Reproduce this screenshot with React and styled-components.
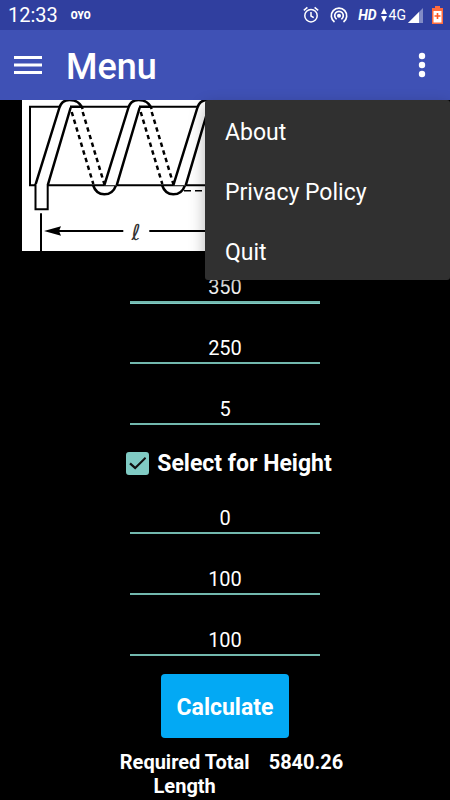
import React, { useState } from 'react';
import styled, { createGlobalStyle } from 'styled-components';

const GlobalStyle = createGlobalStyle`
  * {
    box-sizing: border-box;
  }

  body {
    margin: 0;
    background: #000;
    color: #fff;
    font-family: Roboto, "Liberation Sans", sans-serif;
  }
`;

const Page = styled.div`
  display: flex;
  flex-direction: column;
`;

const StatusBar = styled.div`
  display: flex;
  align-items: center;
  height: 30px;
  padding: 0 7px 0 8px;
  background: #303f9f;
`;

const Clock = styled.span`
  font-size: 20px;
  line-height: 30px;
`;

const Carrier = styled.span`
  flex: 1;
  margin-left: 13px;
  font-size: 10px;
  font-weight: 900;
`;

const StatusIcon = styled.svg`
  flex: none;
  margin-left: ${({ $gap }) => $gap || 0}px;
`;

const HdLabel = styled.span`
  margin-left: 10px;
  font-size: 14px;
  font-style: italic;
  font-weight: 700;
`;

const NetworkLabel = styled.span`
  margin-left: 2px;
  font-size: 14px;
`;

const Toolbar = styled.header`
  position: relative;
  display: flex;
  align-items: center;
  height: 70px;
  padding: 0 14px;
  background: #3f51b5;
`;

const IconButton = styled.button`
  display: flex;
  padding: 0;
  border: 0;
  background: none;
  color: #fff;
  cursor: pointer;
`;

const Title = styled.h1`
  flex: 1;
  margin: 4px 0 0 24px;
  font-size: 36px;
  font-weight: 500;
  line-height: 40px;
`;

const Menu = styled.div`
  position: absolute;
  top: 100%;
  right: 0;
  z-index: 1;
  display: flex;
  flex-direction: column;
  width: 245px;
  border-radius: 3px;
  background: #303030;
  box-shadow: 0 6px 16px rgba(0, 0, 0, 0.3);
`;

const MenuItem = styled.button`
  height: 60px;
  padding: 4px 20px 0;
  border: 0;
  background: none;
  color: #fff;
  font-family: inherit;
  font-size: 23px;
  text-align: left;
  cursor: pointer;
`;

const Figure = styled.svg`
  display: block;
  width: 100%;
  height: auto;
  background: #fff;
`;

const Content = styled.main`
  padding: 0 22px;
`;

const Form = styled.form`
  display: flex;
  flex-direction: column;
  align-items: center;
  margin-top: 18px;
`;

const Fields = styled.div`
  display: flex;
  flex-direction: column;
  gap: 27px;
`;

const Field = styled.input`
  width: 190px;
  height: 34px;
  padding: 3px 0 0;
  border: 0;
  border-bottom: 2px solid #72b8ae;
  outline: 0;
  background: none;
  box-shadow: ${({ $active }) => ($active ? '0 1px 0 #80cbc4' : 'none')};
  color: #fff;
  font-family: inherit;
  font-size: 20px;
  text-align: center;
`;

const CheckRow = styled.label`
  display: flex;
  align-items: center;
  gap: 8px;
  margin: 24px 0 22px;
  padding-left: 8px;
  font-size: 23px;
  font-weight: 700;
  line-height: 29px;
`;

const CheckBox = styled.input`
  appearance: none;
  display: grid;
  place-items: center;
  width: 23px;
  height: 23px;
  margin: 0;
  border: 2px solid #80cbc4;
  border-radius: 3px;

  &:checked {
    background: #80cbc4;
  }

  &:checked::before {
    content: "";
    width: 17px;
    height: 13px;
    background: #111;
    clip-path: polygon(0 55%, 9% 43%, 35% 74%, 92% 0, 100% 11%, 35% 97%);
  }
`;

const SubmitButton = styled.button`
  width: 128px;
  height: 64px;
  margin-top: 18px;
  padding: 2px 0 0;
  border: 0;
  border-radius: 4px;
  background: #03a9f4;
  color: #fff;
  font-family: inherit;
  font-size: 23px;
  font-weight: 700;
  cursor: pointer;
`;

const Result = styled.div`
  display: flex;
  justify-content: center;
  gap: 14px;
  margin-top: 12px;
  padding-left: 8px;
  font-size: 20px;
  font-weight: 700;
  line-height: 24px;
`;

const ResultLabel = styled.label`
  width: 140px;
  text-align: center;
`;

const COIL_STEP = 69;
const COILS = [0, 1, 2, 3, 4];

const CoilFigure = () => (
  <Figure viewBox="0 0 406 151" role="img" aria-label="Coil length diagram">
    <g fill="none" stroke="#000" strokeWidth="2.5">
      <path d="M8 6.7H398V85.3H8Z" strokeWidth="2" />
      {COILS.map((i) => (
        <g key={i} transform={`translate(${i * COIL_STEP} 0)`}>
          <path d="M49.7 12L71.3 84M60.7 12L82.3 84" strokeDasharray="4.4 3.6" />
          <path d="M71 85C73 91 77 94.3 82.3 94.3C88 94.3 92 91 94 85.3" />
        </g>
      ))}
      {COILS.map((i) => (
        <g key={i} transform={`translate(${i * COIL_STEP} 0)`}>
          <path
            d="M13.3 85.3L37.3 8C39 2 42 0 47.5 0C54 0 58 2 60.7 9L60 6.7H48.7L25.7 85.3Z"
            fill="#fff"
            stroke="none"
          />
          <path d="M13.3 85.3L37.3 8C39 2 42 0 47.5 0C54 0 58 2 60.7 9M25.7 85.3L48.7 7.5M48 6.7H60" />
        </g>
      ))}
      <path d="M13.5 84V109.3H25.7V84" fill="#fff" strokeWidth="2" />
      <path d="M19 113.3V151M36 131H101.3M127.3 131H370" strokeWidth="2" />
      <path d="M22 131L39 126.3L37 131L39 135.7Z" fill="#000" stroke="none" />
      <path d="M162 90.7H398" strokeWidth="1.6" strokeDasharray="7 4" />
    </g>
    <text
      x="114"
      y="140"
      textAnchor="middle"
      fontFamily="DejaVu Sans, sans-serif"
      fontSize="22"
      fontStyle="italic"
      fill="#333"
    >
      ℓ
    </text>
  </Figure>
);

const StatusIcons = () => (
  <>
    <StatusIcon width="16" height="18" viewBox="0 0 16 18" fill="none" stroke="#fff" strokeWidth="1.5">
      <circle cx="8" cy="9.7" r="6.2" />
      <path d="M8 6V10L10.7 11.6M.8 4.3L4.4 1.3M15.2 4.3L11.6 1.3" />
    </StatusIcon>
    <StatusIcon $gap={11} width="18" height="18" viewBox="0 0 18 18" fill="none" stroke="#fff" strokeWidth="1.7">
      <circle cx="9" cy="9.7" r="2" fill="#fff" stroke="none" />
      <path d="M4.5 16A7.7 7.7 0 1 1 13.5 16M6.6 13.2A4.3 4.3 0 1 1 11.4 13.2" />
    </StatusIcon>
    <HdLabel>HD</HdLabel>
    <StatusIcon $gap={4} width="6" height="14" viewBox="0 0 6 14" fill="#fff">
      <path d="M0 6L3 0L6 6ZM0 8H6L3 14Z" />
    </StatusIcon>
    <NetworkLabel>4G</NetworkLabel>
    <StatusIcon $gap={2} width="15" height="15" viewBox="0 0 15 15" fill="#fff">
      <path d="M0 15L15 0V15Z" opacity=".4" />
      <path d="M0 15L11 4V15Z" />
    </StatusIcon>
    <StatusIcon $gap={9} width="11" height="18" viewBox="0 0 11 18">
      <path d="M3 0H8V2H11V18H0V2H3Z" fill="#ff6b3d" />
      <path d="M1.5 5H9.5V16.5H1.5Z" fill="#fff" />
      <path d="M5.5 7V13M2.5 10H8.5" stroke="#ff5722" strokeWidth="1.6" />
    </StatusIcon>
  </>
);

const menuItems = ['About', 'Privacy Policy', 'Quit'];

const App = () => {
  const [menuOpen, setMenuOpen] = useState(true);
  const [byHeight, setByHeight] = useState(true);

  return (
    <Page>
      <GlobalStyle />
      <StatusBar>
        <Clock>12:33</Clock>
        <Carrier>OYO</Carrier>
        <StatusIcons />
      </StatusBar>
      <Toolbar>
        <IconButton type="button" aria-label="Open navigation">
          <svg width="28" height="18" viewBox="0 0 28 18" fill="currentColor">
            <path d="M0 0H28V3H0ZM0 7.5H28V10.5H0ZM0 15H28V18H0Z" />
          </svg>
        </IconButton>
        <Title>Menu</Title>
        <IconButton type="button" aria-label="More options" onClick={() => setMenuOpen(!menuOpen)}>
          <svg width="28" height="26" viewBox="0 0 28 26" fill="currentColor">
            <circle cx="14" cy="4" r="3.2" />
            <circle cx="14" cy="13" r="3.2" />
            <circle cx="14" cy="22" r="3.2" />
          </svg>
        </IconButton>
        {menuOpen && (
          <Menu>
            {menuItems.map((item) => (
              <MenuItem key={item} type="button" onClick={() => setMenuOpen(false)}>
                {item}
              </MenuItem>
            ))}
          </Menu>
        )}
      </Toolbar>
      <Content>
        <CoilFigure />
        <Form onSubmit={(e) => e.preventDefault()}>
          <Fields>
            <Field $active aria-label="Outer diameter" inputMode="decimal" defaultValue="350" />
            <Field aria-label="Inner diameter" inputMode="decimal" defaultValue="250" />
            <Field aria-label="Turns" inputMode="decimal" defaultValue="5" />
          </Fields>
          <CheckRow>
            <CheckBox
              type="checkbox"
              checked={byHeight}
              onChange={(e) => setByHeight(e.target.checked)}
            />
            Select for Height
          </CheckRow>
          <Fields>
            <Field aria-label="Height" inputMode="decimal" defaultValue="0" />
            <Field aria-label="Pitch" inputMode="decimal" defaultValue="100" />
            <Field aria-label="Lead" inputMode="decimal" defaultValue="100" />
          </Fields>
          <SubmitButton type="submit">Calculate</SubmitButton>
        </Form>
        <Result>
          <ResultLabel htmlFor="total-length">Required Total Length</ResultLabel>
          <output id="total-length">5840.26</output>
        </Result>
      </Content>
    </Page>
  );
};

export default App;
